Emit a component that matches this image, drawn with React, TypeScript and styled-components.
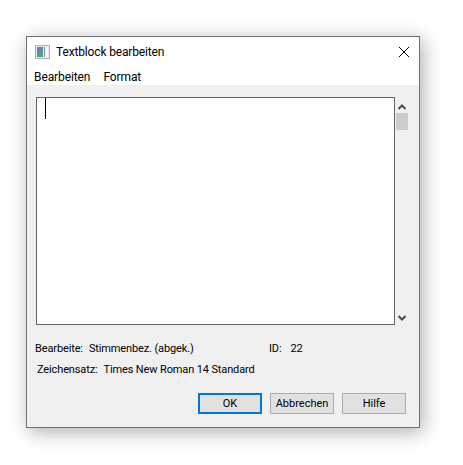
import React from "react";
import styled, { createGlobalStyle } from "styled-components";

const Global = createGlobalStyle`
  html, body { margin: 0; padding: 0; background: #fff; }
  body { width: 463px; height: 465px; overflow: hidden; font-family: Roboto, "Noto Sans", sans-serif; }
`;

const Desktop = styled.div`
  width: 463px;
  height: 465px;
  padding: 36px 0 0 26px;
  box-sizing: border-box;
`;

const Dialog = styled.div`
  width: 394px;
  height: 392px;
  box-sizing: border-box;
  border: 1px solid #707070;
  background: #f0f0f0;
  box-shadow: 3px 4px 18px rgba(0, 0, 0, 0.32);
  display: flex;
  flex-direction: column;
  color: #000;
  font-size: 12px;
  line-height: 16px;
`;

const TitleBar = styled.div`
  height: 30px;
  background: #fff;
  display: flex;
  align-items: center;
  padding: 0 9px 0 8px;
  gap: 6px;
`;

const Title = styled.span`
  flex: 1;
  letter-spacing: -0.15px;
`;

const CloseButton = styled.div`
  display: flex;
`;

const MenuBar = styled.div`
  height: 18px;
  background: #fff;
  display: flex;
  gap: 13px;
  padding: 2px 0 0 7px;
  box-sizing: border-box;
  align-items: flex-start;
  letter-spacing: -0.1px;
`;

const Body = styled.div`
  flex: 1;
  display: flex;
  flex-direction: column;
  padding: 12px 11px 0 9px;
`;

const EditorRow = styled.div`
  display: flex;
  height: 228px;
`;

const Editor = styled.div`
  width: 359px;
  flex-shrink: 0;
  box-sizing: border-box;
  border: 1px solid #646464;
  background: #fff;
  padding: 0 8px;
`;

const Caret = styled.div`
  width: 1px;
  height: 21px;
  background: #000;
`;

const Scrollbar = styled.div`
  width: 12px;
  margin-left: 1px;
  flex-shrink: 0;
  display: flex;
  flex-direction: column;
  align-items: center;
`;

const Thumb = styled.div`
  width: 12px;
  height: 17px;
  background: #cdcdcd;
  margin-top: 3px;
`;

const Arrow = styled.svg<{ $bottom?: boolean }>`
  width: 8px;
  height: 6px;
  margin-top: ${(p) => (p.$bottom ? "auto" : "7px")};
  margin-bottom: ${(p) => (p.$bottom ? "4px" : "0")};
`;

const InfoRow = styled.div<{ $indent: number; $top: number }>`
  display: flex;
  margin: ${(p) => p.$top}px 0 0 ${(p) => p.$indent}px;
  white-space: nowrap;
  font-size: 11px;
  letter-spacing: -0.13px;
`;

const Field = styled.span<{ $width?: number }>`
  width: ${(p) => (p.$width ? `${p.$width}px` : "auto")};
  display: flex;
`;

const Label = styled.span<{ $gap: number }>`
  margin-right: ${(p) => p.$gap}px;
`;

const Buttons = styled.div`
  display: flex;
  justify-content: flex-end;
  gap: 8px;
  margin: 15px 2px 0 0;
`;

const Button = styled.div<{ $primary?: boolean }>`
  width: 64px;
  height: 21px;
  box-sizing: border-box;
  background: #e1e1e1;
  border: ${(p) => (p.$primary ? "2px solid #0078d7" : "1px solid #adadad")};
  display: flex;
  align-items: center;
  justify-content: center;
  font-size: 11px;
`;

function AppIcon() {
  return (
    <svg width="15" height="14" viewBox="0 0 15 14">
      <rect x="0.5" y="0.5" width="14" height="13" fill="#e8e8e8" stroke="#b0b0b0" />
      <rect x="2" y="2" width="6" height="10" fill="#52a08c" />
      <rect x="2" y="2" width="6" height="4" fill="#6484ab" />
      <rect x="9" y="2" width="1" height="10" fill="#8a98a0" />
      <rect x="11" y="2" width="2" height="10" fill="#f8f8f8" />
    </svg>
  );
}

export default function App() {
  return (
    <Desktop>
      <Global />
      <Dialog>
        <TitleBar>
          <AppIcon />
          <Title>Textblock bearbeiten</Title>
          <CloseButton>
            <svg width="12" height="12" viewBox="0 0 12 12">
              <path d="M1 1l10 10M11 1L1 11" stroke="#000" strokeWidth="1" fill="none" />
            </svg>
          </CloseButton>
        </TitleBar>
        <MenuBar>
          <span>Bearbeiten</span>
          <span>Format</span>
        </MenuBar>
        <Body>
          <EditorRow>
            <Editor>
              <Caret />
            </Editor>
            <Scrollbar>
              <Arrow viewBox="0 0 8 6">
                <path d="M0.5 5L4 1.5 7.5 5" stroke="#505050" strokeWidth="2" fill="none" />
              </Arrow>
              <Thumb />
              <Arrow $bottom viewBox="0 0 8 6">
                <path d="M0.5 1L4 4.5 7.5 1" stroke="#505050" strokeWidth="2" fill="none" />
              </Arrow>
            </Scrollbar>
          </EditorRow>
          <InfoRow $indent={-1} $top={16}>
            <Field $width={234}>
              <Label $gap={6}>Bearbeite:</Label>
              Stimmenbez. (abgek.)
            </Field>
            <Field>
              <Label $gap={9}>ID:</Label>
              22
            </Field>
          </InfoRow>
          <InfoRow $indent={1} $top={5}>
            <Field>
              <Label $gap={6}>Zeichensatz:</Label>
              Times New Roman 14 Standard
            </Field>
          </InfoRow>
          <Buttons>
            <Button $primary>OK</Button>
            <Button>Abbrechen</Button>
            <Button>Hilfe</Button>
          </Buttons>
        </Body>
      </Dialog>
    </Desktop>
  );
}
